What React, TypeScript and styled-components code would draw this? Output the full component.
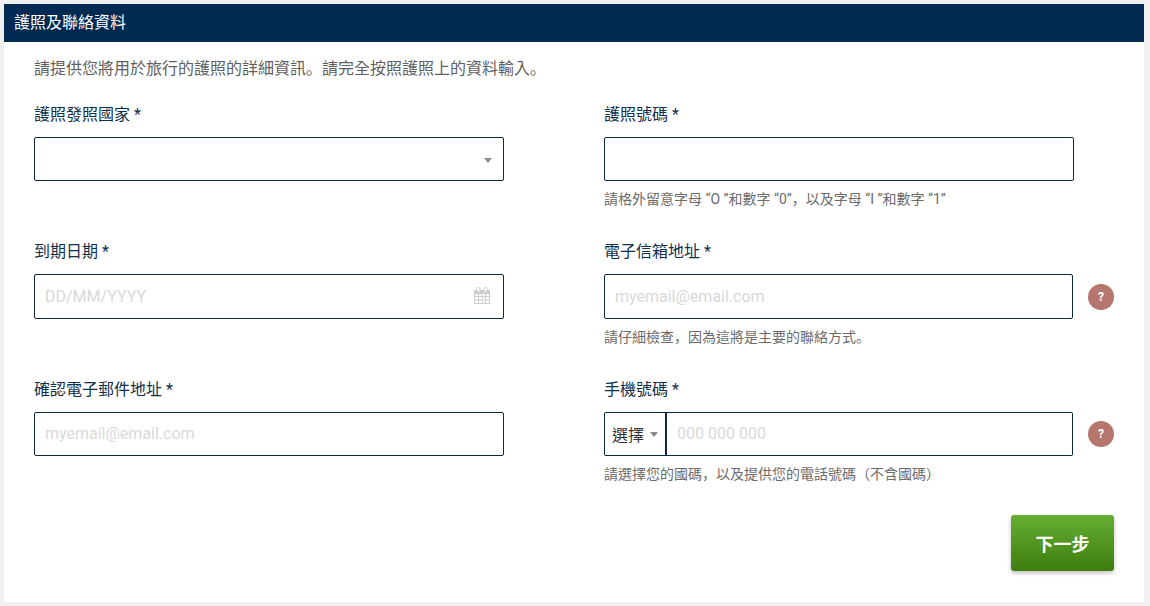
import React from 'react'
import styled, { createGlobalStyle } from 'styled-components'

const FONT = `Roboto, "Noto Sans CJK TC", "Noto Sans CJK SC", sans-serif`

const GlobalStyle = createGlobalStyle`
  html, body {
    margin: 0;
    padding: 0;
    background: #f0f0f0;
  }
  * {
    box-sizing: border-box;
  }
`

const Page = styled.div`
  width: 1150px;
  height: 606px;
  padding: 4px 6px 4px 4px;
  overflow: hidden;
  font-family: ${FONT};
`

const Panel = styled.section`
  height: 598px;
  background: #fff;
`

const Header = styled.h2`
  margin: 0;
  height: 38px;
  padding-left: 10px;
  background: #002a52;
  color: #fff;
  font-size: 16px;
  font-weight: 400;
  line-height: 38px;
`

const Body = styled.div`
  padding: 14px 30px 0;
`

const Intro = styled.p`
  margin: 0;
  height: 22px;
  color: #5f5f5f;
  font-size: 16px;
  line-height: 22px;
`

const Grid = styled.div`
  display: grid;
  grid-template-columns: 470px 510px;
  grid-template-rows: 137px 138px 137px;
  column-gap: 100px;
  margin-top: 25px;
`

const Field = styled.div`
  display: flex;
  flex-direction: column;
  align-items: flex-start;
`

const Label = styled.label`
  height: 24px;
  margin-bottom: 10px;
  color: #0f2f4c;
  font-size: 16px;
  line-height: 24px;
`

const Row = styled.div`
  display: flex;
  align-items: center;
`

const Box = styled.div<{ $width?: number; $height?: number }>`
  display: flex;
  align-items: center;
  justify-content: space-between;
  width: ${p => p.$width ?? 470}px;
  height: ${p => p.$height ?? 44}px;
  padding: 0 11px 1px 10px;
  background: #fff;
  border: 1px solid #0b2a3f;
  border-radius: 2px;
`

const Placeholder = styled.span`
  color: #d9d9d9;
  font-size: 16px;
`

const Hint = styled.p`
  margin: 8px 0 0;
  color: #6b6b6b;
  font-size: 14px;
  line-height: 18px;
`

// the full-width marks sit low and to the left in the reference
const Punct = styled.span`
  font-family: "Noto Sans CJK SC", sans-serif;
`

const Caret = styled.span`
  width: 0;
  height: 0;
  border-left: 4px solid transparent;
  border-right: 4px solid transparent;
  border-top: 5px solid #8a8a8a;
`

const SelectCaret = styled(Caret)`
  margin-top: 4px;
`

const Help = styled.span`
  display: flex;
  align-items: center;
  justify-content: center;
  width: 26px;
  height: 26px;
  margin-left: 15px;
  border-radius: 50%;
  background: #b4766d;
  color: #fff;
  font-size: 12px;
  font-weight: 700;
`

const PhoneRow = styled.div`
  display: flex;
  width: 469px;
`

const CodeSelect = styled.div`
  display: flex;
  align-items: center;
  gap: 6px;
  width: 63px;
  height: 44px;
  padding-left: 7px;
  border: 1px solid #0b2a3f;
  border-right-width: 2px;
  border-radius: 2px 0 0 2px;
  color: #333;
  font-size: 16px;
`

const PhoneInput = styled(Box)`
  flex: 1;
  width: auto;
  border-left: 0;
  border-radius: 0 2px 2px 0;
`

const Footer = styled.div`
  display: flex;
  justify-content: flex-end;
`

const NextButton = styled.button`
  width: 103px;
  height: 56px;
  border: 0;
  border-radius: 3px;
  background: linear-gradient(#65ae33, #3f7d0e);
  box-shadow: 0 2px 4px rgba(0, 0, 0, 0.25);
  color: #fff;
  font-family: ${FONT};
  font-size: 18px;
  font-weight: 700;
`

const CalendarSvg = styled.svg`
  margin-right: 2px;
  margin-bottom: 1px;
`

const CalendarIcon = () => (
  <CalendarSvg width="16" height="17" viewBox="0 0 16 17" fill="none" stroke="#cdcdcd" strokeWidth="1">
    <path d="M0.5 3.5h15v13h-15z" />
    <path d="M0.5 3.5h15v3h-15z" fill="#cdcdcd" />
    <path d="M3 4.5v-3a1.5 1 0 0 1 3 0v3M10 4.5v-3a1.5 1 0 0 1 3 0v3" fill="#fff" />
    <path d="M0.5 9.5h15M0.5 13h15M4.5 6.5v10M8 6.5v10M11.5 6.5v10" />
  </CalendarSvg>
)

export default function App() {
  return (
    <Page>
      <GlobalStyle />
      <Panel>
        <Header>護照及聯絡資料</Header>
        <Body>
          <Intro>
            請提供您將用於旅行的護照的詳細資訊<Punct>。</Punct>請完全按照護照上的資料輸入<Punct>。</Punct>
          </Intro>
          <Grid>
            <Field>
              <Label>護照發照國家 *</Label>
              <Box>
                <span />
                <SelectCaret />
              </Box>
            </Field>
            <Field>
              <Label>護照號碼 *</Label>
              <Box />
              <Hint>
                請格外留意字母 “O ”和數字 “0”<Punct>，</Punct>以及字母 “I ”和數字 “1”
              </Hint>
            </Field>
            <Field>
              <Label>到期日期 *</Label>
              <Box $height={45}>
                <Placeholder>DD/MM/YYYY</Placeholder>
                <CalendarIcon />
              </Box>
            </Field>
            <Field>
              <Label>電子信箱地址 *</Label>
              <Row>
                <Box $width={469} $height={45}>
                  <Placeholder>myemail@email.com</Placeholder>
                </Box>
                <Help>?</Help>
              </Row>
              <Hint>
                請仔細檢查<Punct>，</Punct>因為這將是主要的聯絡方式<Punct>。</Punct>
              </Hint>
            </Field>
            <Field>
              <Label>確認電子郵件地址 *</Label>
              <Box>
                <Placeholder>myemail@email.com</Placeholder>
              </Box>
            </Field>
            <Field>
              <Label>手機號碼 *</Label>
              <Row>
                <PhoneRow>
                  <CodeSelect>
                    選擇
                    <Caret />
                  </CodeSelect>
                  <PhoneInput>
                    <Placeholder>000 000 000</Placeholder>
                  </PhoneInput>
                </PhoneRow>
                <Help>?</Help>
              </Row>
              <Hint>
                請選擇您的國碼<Punct>，</Punct>以及提供您的電話號碼（不含國碼）
              </Hint>
            </Field>
          </Grid>
          <Footer>
            <NextButton>下一步</NextButton>
          </Footer>
        </Body>
      </Panel>
    </Page>
  )
}
